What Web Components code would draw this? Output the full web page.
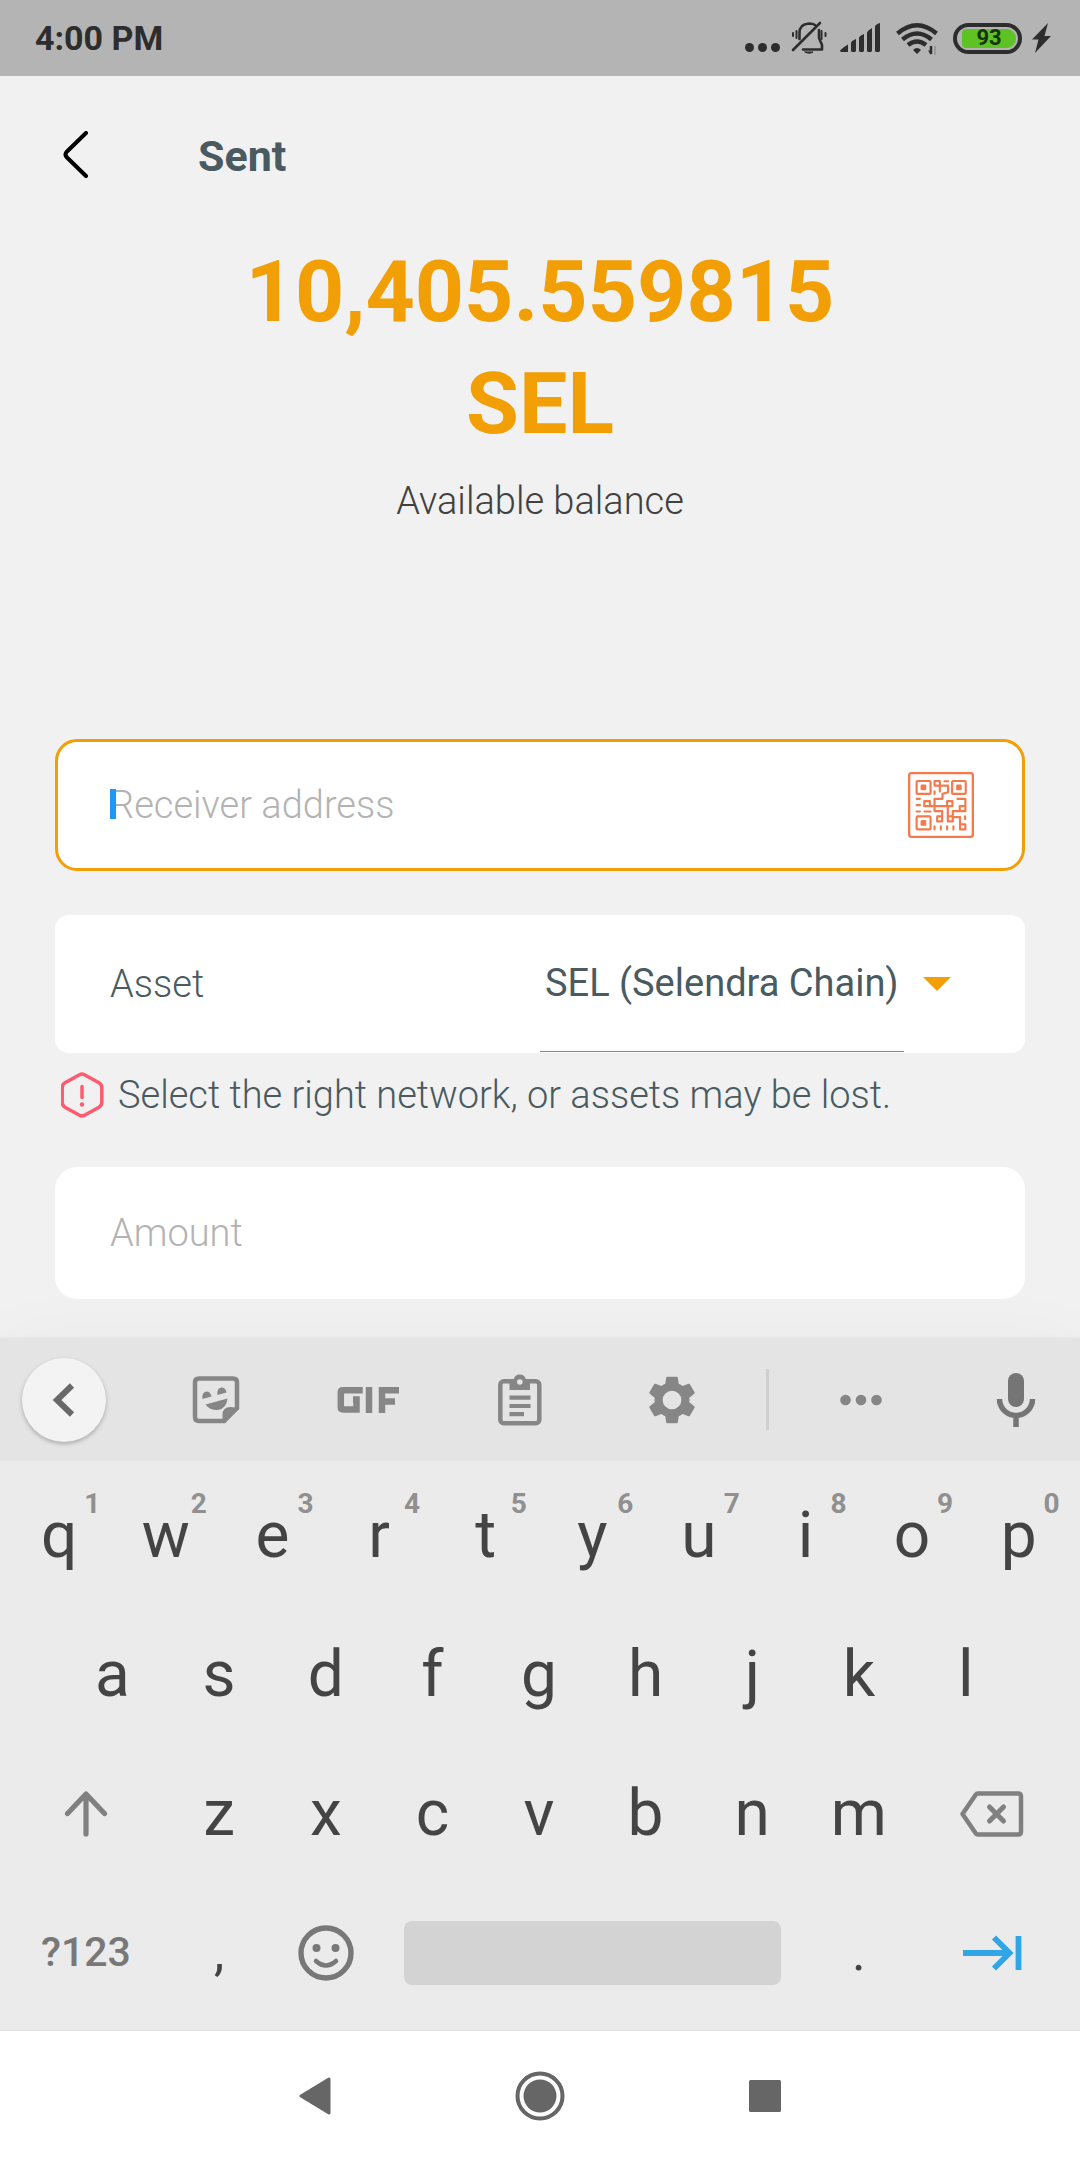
<!DOCTYPE html>
<html lang="en">
<head>
<meta charset="utf-8">
<meta name="viewport" content="width=device-width, initial-scale=1">
<title>Sent</title>
<style>
  body { margin: 0; background: #f1f1f1; font-family: Roboto, "Liberation Sans", sans-serif; }
</style>
</head>
<body>
<wallet-screen></wallet-screen>

<template id="wallet-screen">
  <style>
    :host { display: flex; flex-direction: column; min-height: 100vh; color: #4a5a61; }
    main { flex: 1; padding: 0 55px 38px; }
    balance-display { margin-bottom: 214px; }
    asset-picker { margin-top: 44px; }
    network-warning { margin: 19px 0 49px; }
  </style>
  <status-bar></status-bar>
  <app-header>Sent</app-header>
  <main>
    <balance-display amount="10,405.559815" unit="SEL">Available balance</balance-display>
    <text-field label="Receiver address" active>
      <svg width="66" height="66" viewBox="82 97 199 199" fill="none" stroke="#f47a4d" stroke-width="7" stroke-linecap="round" stroke-linejoin="round">
        <rect x="85.500" y="100.500" width="192" height="192" rx="7"/>
        <g stroke-width="6.500">
          <rect x="108" y="124" width="42" height="39" rx="3"/><rect x="215" y="124" width="41" height="39" rx="3"/><rect x="108" y="231" width="42" height="39" rx="3"/>
          <path d="M162 124h16v14h-16zM178 138h25v20l-17 5v15h-24v22M178 138v18M192 125h11M162 155v8M108 178h10M108 197h10M108 216h10M132 216h18M131 185h17v15h-17zM148 200h60M200 185h16v15h-16zM162 200v15h23v31h-15v-15h15M202 200v31M231 178h24v37h-38v31h-15v-15h15M238 200h17v15h-17zM217 233h22v36M239 255h16v15h-16zM254 231v8M162 261v9M181 261v9M200 261v9M219 261v9"/>
        </g>
        <g fill="#f47a4d" stroke="none"><rect x="120" y="135" width="17" height="17" rx="4"/><rect x="227" y="135" width="17" height="17" rx="4"/><rect x="120" y="242" width="17" height="17" rx="4"/></g>
      </svg>
    </text-field>
    <asset-picker></asset-picker>
    <network-warning>Select the right network, or assets may be lost.</network-warning>
    <text-field label="Amount"></text-field>
  </main>
  <soft-keyboard></soft-keyboard>
  <nav-bar></nav-bar>
</template>

<template id="status-bar">
  <style>
    :host { display: flex; align-items: center; justify-content: space-between; height: 76px; padding: 0 28px 0 35px; background: #b4b4b4; color: #2d2d2d; }
    time { font-size: 34px; font-weight: 700; }
    .icons { display: flex; align-items: center; gap: 10px; }
    svg { display: block; }
    .battery { box-sizing: border-box; width: 69px; height: 31px; border: 4px solid #2d2d2d; border-radius: 16px; padding: 2px; display: flex; }
    .level { flex: 1; margin: 0 0 0 3px; border-radius: 4px 9px 9px 4px; background: #5ec225; color: #17330a; font-size: 22px; line-height: 20px; font-weight: 700; text-align: center; display: grid; place-content: center; }
  </style>
  <time>4:00 PM</time>
  <div class="icons">
    <svg width="36" height="36" fill="#2d2d2d"><circle cx="4.500" cy="27.500" r="4.500"/><circle cx="17.500" cy="27.500" r="4.500"/><circle cx="30.500" cy="27.500" r="4.500"/></svg>
    <svg width="38" height="36" viewBox="791 20 38 36" fill="none" stroke="#2d2d2d" stroke-width="2.600" stroke-linecap="round" stroke-linejoin="round"><path d="M793 50l27-27"/><path d="M799.500 39v-6q0-9 9.500-9.500 4 0 6 1.500M819 30v8l3 7v4.500H803"/><path d="M805 52h8a5 3 0 0 1-8 0z" fill="#2d2d2d" stroke-width="1"/><path stroke-width="2" d="M796.500 31v7M793 33v3M821.500 31v8M825.500 33v3"/></svg>
    <svg width="46" height="36" viewBox="839 20 46 36" fill="#2d2d2d"><path d="M840 51q0-1.500 8-6.500v7.500h-7zM851 43q0-2 5-4v11q0 2-1 2h-3q-1 0-1-2zM859 38q0-2 5-4v16q0 2-1 2h-3q-1 0-1-2zM867 33q0-2 5-5v22q0 2-1 2h-3q-1 0-1-2zM875 27q0-2.500 5-4v27q0 2-1 2h-3q-1 0-1-2z"/></svg>
    <svg width="48" height="36" viewBox="895 20 48 36" fill="none" stroke="#2d2d2d" stroke-width="4.500"><path d="M897.500 33.500Q917 17 936.500 33.500M902.500 39.500Q917 27.500 931.500 39.500M908 45Q917 38 926 45"/><path d="M913 50q4-4 8 0l-4 4z" fill="#2d2d2d" stroke="none"/><path d="M931 46v8" stroke-width="2.500"/><path d="M928 50.500h3V55z" fill="#2d2d2d" stroke="none"/><path d="M935 46v9" stroke="#999" stroke-width="2"/></svg>
    <div class="battery"><span class="level">93</span></div>
    <svg width="20" height="36" viewBox="1032 20 20 36" fill="#2d2d2d"><path d="M1048 23l-16 16.500h6.500L1035 53l16-17h-6.500z"/></svg>
  </div>
</template>

<template id="app-header">
  <style>
    :host { display: flex; align-items: center; height: 160px; padding: 0 55px; }
    button { all: unset; display: block; width: 143px; height: 50px; cursor: pointer; }
    h1 { margin: 0; font-size: 43px; font-weight: 700; color: #4a5a61; }
    svg { display: block; }
  </style>
  <button aria-label="Back"><svg width="50" height="50" fill="none" stroke="#000" stroke-width="4" stroke-linecap="round"><path d="M31 2 12 20.500q-3 3 0 6L31 45"/></svg></button>
  <h1><slot></slot></h1>
</template>

<template id="balance-display">
  <style>
    :host { display: block; text-align: center; }
    p { margin: 0; }
    .value { font-size: 86px; line-height: 112px; font-weight: 700; color: #f29f05; }
    .value span { display: block; }
    .note { margin-top: 17px; font-size: 38px; line-height: 48px; font-weight: 350; color: #414141; }
  </style>
  <p class="value"><span id="amount"></span><span id="unit"></span></p>
  <p class="note"><slot></slot></p>
</template>

<template id="text-field">
  <style>
    :host { display: block; }
    label { position: relative; box-sizing: border-box; display: flex; align-items: center; height: 132px; padding: 0 48px 0 52px; border: 3px solid #fff; border-radius: 22px; background: #fff; }
    :host([active]) label { border-color: #f29f05; }
    input { flex: 1; min-width: 0; padding: 0; border: 0; outline: 0; background: none; font: inherit; font-size: 38px; font-weight: 350; color: #4a5a61; }
    input::placeholder { color: #b3b3b3; opacity: 1; }
    i { display: none; position: absolute; left: 52px; top: 47px; width: 6px; height: 30px; background: #2196f3; }
    :host([active]) i { display: block; }
  </style>
  <label><input type="text"><i></i><slot></slot></label>
</template>

<template id="asset-picker">
  <style>
    :host { display: flex; align-items: center; height: 138px; padding: 0 74px 0 55px; border-radius: 14px; background: #fff; box-sizing: border-box; }
    label { flex: 1; font-size: 38px; font-weight: 350; }
    .box { align-self: stretch; display: flex; margin-bottom: 1px; border-bottom: 1px solid #2aa9e0; }
    select { appearance: none; padding: 0 5px; border: 0; outline: 0; background: none; font: inherit; font-size: 38px; color: #4a5a61; }
    svg { display: block; margin-left: 19px; }
  </style>
  <label for="asset">Asset</label>
  <span class="box"><select id="asset"><option>SEL (Selendra Chain)</option></select></span>
  <svg width="28" height="14" fill="#f29f05"><path d="M0 0h28L14 14z"/></svg>
</template>

<template id="network-warning">
  <style>
    :host { display: flex; align-items: center; gap: 14px; height: 46px; padding-left: 6px; font-size: 38px; font-weight: 350; white-space: nowrap; }
    svg { flex: none; display: block; }
  </style>
  <svg width="43" height="46" fill="none" stroke="#ff5a6e" stroke-width="3.500" stroke-linecap="round"><path d="M18.500 2.700q2.500-1.400 5 0l14.500 8q2.800 1.600 2.800 5v14.500q0 3.400-2.800 5l-14.500 8q-2.500 1.400-5 0l-14.500-8q-2.800-1.600-2.800-5V15.700q0-3.400 2.800-5z"/><path d="M21 14.500v11"/><circle cx="21" cy="32.500" r="2.200" fill="#ff5a6e" stroke="none"/></svg>
  <span><slot></slot></span>
</template>

<template id="soft-keyboard">
  <style>
    :host { display: block; background: #ebebeb; box-shadow: 0 0 4px rgba(0,0,0,.06), 0 0 70px rgba(0,0,0,.03); border-bottom: 1px solid #e0e0e0; }
    .tools { display: grid; grid-template-columns: 128fr 176fr 128fr 176fr 128fr 33fr 183fr 128fr; align-items: center; justify-items: center; height: 123px; background: #e4e4e4; color: #868686; }
    .tools button { all: unset; display: block; cursor: pointer; }
    .tools svg { display: block; }
    .tools .back { display: grid; place-items: center; width: 84px; height: 84px; border-radius: 50%; background: #f3f3f3; box-shadow: 0 2px 4px rgba(0,0,0,.25); }
    .divider { justify-self: end; width: 3px; height: 61px; background: #cfcfcf; }
    .keys { padding: 5px 8px 8px 6px; }
    .row { display: flex; height: 139px; }
    .row.inset { padding: 0 53px; }
    .space { flex: 4 0 0; display: flex; align-items: center; }
    .space button { all: unset; flex: 1; height: 64px; margin: 0 25px; border-radius: 8px; background: #d3d3d3; }
  </style>
  <div class="tools">
    <button class="back" aria-label="Collapse"><svg width="24" height="36" fill="none" stroke="#686868" stroke-width="6"><path d="M20 3.500 5 18l15 14.500"/></svg></button>
    <button aria-label="Stickers"><svg width="48" height="48" viewBox="0 0 48 48"><path d="M7 2.500h34q4 0 4 4V32L32 45H7q-4 0-4-4V6.500q0-4 4-4z" fill="none" stroke="#868686" stroke-width="4.500"/><path d="M47 32 33 47h-2.500v-8q0-8 8-8z" fill="#868686"/><path d="M10.500 23q-1-7 4-7.500 4 0 5 5zM25.500 19q-1-7 4-7.500 4 0 5 5zM13.500 28.500l22-6q-1 10-9.500 11.500-8 .5-12.500-5.500z" fill="#868686"/></svg></button>
    <button aria-label="GIF"><svg width="62" height="28" viewBox="0 0 62 28" fill="none" stroke="#868686" stroke-width="6.500"><path d="M22.500 7.500V4.300H6q-2.200 0-2.200 2.200v14.800q0 2.200 2.200 2.200h13.500V13.500H16"/><path d="M32 1v26M45 27V4.300h17M45 15.500h13"/></svg></button>
    <button aria-label="Clipboard"><svg width="44" height="52" viewBox="0 0 44 52"><rect x="2.300" y="7.300" width="39" height="42" rx="3.500" fill="none" stroke="#868686" stroke-width="4.500"/><path d="M11.500 6h4q1-5.500 6.300-5.500T28 6h4v10H11.500z" fill="#868686"/><circle cx="21.800" cy="8" r="2.800" fill="#e4e4e4"/><path d="M11.500 23.700h21M11.500 32h21M11.500 40.200H26" stroke="#868686" stroke-width="4.200"/></svg></button>
    <button aria-label="Settings"><svg width="56" height="56" viewBox="0 0 24 24"><path fill="#868686" d="M19.430 12.980c.040-.320.070-.640.070-.980s-.030-.660-.070-.980l2.110-1.650c.190-.150.240-.420.120-.640l-2-3.460c-.120-.220-.390-.300-.610-.220l-2.490 1c-.520-.400-1.080-.730-1.690-.980l-.380-2.650C14.460 2.180 14.250 2 14 2h-4c-.250 0-.460.180-.490.420l-.380 2.650c-.610.250-1.170.590-1.690.980l-2.490-1c-.230-.090-.490 0-.610.220l-2 3.460c-.130.220-.070.490.120.640l2.110 1.650c-.040.320-.070.650-.070.980s.030.660.070.980l-2.110 1.650c-.190.150-.240.420-.120.640l2 3.460c.120.220.390.300.610.220l2.490-1c.520.400 1.080.730 1.690.980l.380 2.650c.030.240.240.420.490.420h4c.250 0 .460-.180.490-.420l.380-2.650c.610-.250 1.170-.590 1.690-.980l2.490 1c.230.090.490 0 .610-.220l2-3.460c.120-.220.070-.490-.120-.640zM12 16a4 4 0 1 1 0-8 4 4 0 0 1 0 8z"/></svg></button>
    <span class="divider"></span>
    <button aria-label="More"><svg width="42" height="12" fill="#868686"><circle cx="5.500" cy="6" r="5.300"/><circle cx="21" cy="6" r="5.300"/><circle cx="36.500" cy="6" r="5.300"/></svg></button>
    <button aria-label="Voice input"><svg width="40" height="54" viewBox="0 0 40 54"><rect x="12" y="0" width="16" height="34" rx="8" fill="#757575"/><path d="M3.500 26a16.500 16.500 0 0 0 33 0M20 43v11" fill="none" stroke="#757575" stroke-width="5.500"/></svg></button>
  </div>
  <div class="keys">
    <div class="row"><key-cap hint="1">q</key-cap><key-cap hint="2">w</key-cap><key-cap hint="3">e</key-cap><key-cap hint="4">r</key-cap><key-cap hint="5">t</key-cap><key-cap hint="6">y</key-cap><key-cap hint="7">u</key-cap><key-cap hint="8">i</key-cap><key-cap hint="9">o</key-cap><key-cap hint="0">p</key-cap></div>
    <div class="row inset"><key-cap>a</key-cap><key-cap>s</key-cap><key-cap>d</key-cap><key-cap>f</key-cap><key-cap>g</key-cap><key-cap>h</key-cap><key-cap>j</key-cap><key-cap>k</key-cap><key-cap>l</key-cap></div>
    <div class="row">
      <key-cap wide label="Shift"><svg width="44" height="48" fill="none" stroke="#808080" stroke-width="5.200" stroke-linecap="round" stroke-linejoin="round"><path d="M22 4v40M3.500 23.500 22 4l18.500 19.500"/></svg></key-cap>
      <key-cap>z</key-cap><key-cap>x</key-cap><key-cap>c</key-cap><key-cap>v</key-cap><key-cap>b</key-cap><key-cap>n</key-cap><key-cap>m</key-cap>
      <key-cap wide label="Backspace"><svg width="64" height="46" fill="none" stroke="#808080" stroke-width="4.500" stroke-linecap="round" stroke-linejoin="round"><path d="M18 2.500h40q3 0 3 3v35q0 3-3 3H18q-1.500 0-2.500-1.500L2.500 23l13-19Q16.500 2.500 18 2.500z"/><path d="M29.500 16l14 14M43.500 16l-14 14" stroke-width="5"/></svg></key-cap>
    </div>
    <div class="row">
      <key-cap wide mode>?123</key-cap>
      <key-cap mark>,</key-cap>
      <key-cap label="Emoji"><svg width="56" height="56" viewBox="0 0 56 56" fill="none" stroke="#787878"><circle cx="28" cy="28" r="25" stroke-width="5.400"/><circle cx="18.500" cy="23" r="4" fill="#787878" stroke="none"/><circle cx="37.500" cy="23" r="4" fill="#787878" stroke="none"/><path d="M18 36q10 9 20 0" stroke-width="4.500" stroke-linecap="round"/></svg></key-cap>
      <span class="space"><button aria-label="Space"></button></span>
      <key-cap mark>.</key-cap>
      <key-cap wide label="Next field"><svg width="60" height="36" fill="none" stroke="#30a6e6" stroke-width="5.800"><path d="M1 18h46M32 2.500 47.500 18 32 33.500M56.500 1v34"/></svg></key-cap>
    </div>
  </div>
</template>

<template id="key-cap">
  <style>
    :host { position: relative; flex: 1 0 0; display: flex; min-width: 0; }
    :host([wide]) { flex-grow: 1.5; }
    button { all: unset; flex: 1; display: grid; place-items: center; font-size: 64px; line-height: 75px; color: #444; cursor: pointer; }
    :host([mode]) button { font-size: 41px; font-weight: 500; color: #787878; }
    :host([mark]) button { font-size: 52px; }
    small { position: absolute; left: 50%; top: 21px; width: 66px; text-align: center; font-size: 28px; line-height: 33px; font-weight: 700; color: #909090; }
    small:empty { display: none; }
    ::slotted(svg) { display: block; }
  </style>
  <button><slot></slot></button><small></small>
</template>

<template id="nav-bar">
  <style>
    :host { display: flex; align-items: center; justify-content: center; gap: 161px; height: 129px; background: #fff; }
    button { all: unset; display: grid; place-items: center; width: 64px; height: 64px; cursor: pointer; }
  </style>
  <button aria-label="Back"><svg width="32" height="38" fill="#666" stroke="#666" stroke-width="3" stroke-linejoin="round"><path d="M30 2v34L2 19z"/></svg></button>
  <button aria-label="Home"><svg width="50" height="50"><circle cx="25" cy="25" r="22.500" fill="none" stroke="#666" stroke-width="4"/><circle cx="25" cy="25" r="16.500" fill="#666"/></svg></button>
  <button aria-label="Recents"><svg width="32" height="32"><rect width="32" height="32" rx="1.500" fill="#666"/></svg></button>
</template>

<script>
  class TemplateElement extends HTMLElement {
    constructor() {
      super();
      const template = document.getElementById(this.localName);
      this.attachShadow({ mode: 'open' }).append(template.content.cloneNode(true));
    }
    find(selector) { return this.shadowRoot.querySelector(selector); }
  }

  class BalanceDisplay extends TemplateElement {
    connectedCallback() {
      this.find('#amount').textContent = this.getAttribute('amount');
      this.find('#unit').textContent = this.getAttribute('unit');
    }
  }

  class TextField extends TemplateElement {
    connectedCallback() {
      const input = this.find('input');
      input.placeholder = this.getAttribute('label');
      input.setAttribute('aria-label', this.getAttribute('label'));
    }
  }

  class KeyCap extends TemplateElement {
    connectedCallback() {
      this.find('small').textContent = this.getAttribute('hint') || '';
      if (this.hasAttribute('label')) this.find('button').setAttribute('aria-label', this.getAttribute('label'));
    }
  }

  customElements.define('status-bar', class extends TemplateElement {});
  customElements.define('app-header', class extends TemplateElement {});
  customElements.define('balance-display', BalanceDisplay);
  customElements.define('text-field', TextField);
  customElements.define('asset-picker', class extends TemplateElement {});
  customElements.define('network-warning', class extends TemplateElement {});
  customElements.define('key-cap', KeyCap);
  customElements.define('soft-keyboard', class extends TemplateElement {});
  customElements.define('nav-bar', class extends TemplateElement {});
  customElements.define('wallet-screen', class extends TemplateElement {});
</script>
</body>
</html>
